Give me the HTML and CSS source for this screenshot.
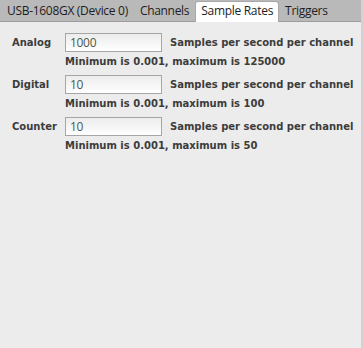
FILE: index.html
```html
<!DOCTYPE html>
<html lang="en">
<head>
    <meta charset="UTF-8">
    <title>Sample Rates</title>
    <link rel="stylesheet" href="styles.css">
</head>
<body>
    <div class="window">
        <div class="tabs">
            <span class="tab">USB-1608GX (Device 0)</span>
            <span class="tab">Channels</span>
            <span class="tab active">Sample Rates</span>
            <span class="tab">Triggers</span>
        </div>
        <div class="rates">
            <div class="rate-row">
                <span class="rate-label">Analog</span>
                <input class="rate-input" type="text" value="1000">
                <span class="rate-unit">Samples per second per channel</span>
            </div>
            <div class="rate-hint">Minimum is 0.001, maximum is 125000</div>

            <div class="rate-row">
                <span class="rate-label">Digital</span>
                <input class="rate-input" type="text" value="10">
                <span class="rate-unit">Samples per second per channel</span>
            </div>
            <div class="rate-hint">Minimum is 0.001, maximum is 100</div>

            <div class="rate-row">
                <span class="rate-label">Counter</span>
                <input class="rate-input" type="text" value="10">
                <span class="rate-unit">Samples per second per channel</span>
            </div>
            <div class="rate-hint">Minimum is 0.001, maximum is 50</div>
        </div>
    </div>
</body>
</html>
```

FILE: styles.css
```css
/* Page */
body {
    margin: 0;
    background: #ececec;
    font-family: "DejaVu Sans", Tahoma, sans-serif;
}

.window {
    height: 348px;
    box-sizing: border-box;
    border-right: 2px solid #d2d2d2;
}

/* Tab strip */
.tabs {
    display: flex;
    align-items: flex-end;
    height: 21px;
    background: #b9b9b9;
    border-bottom: 1px solid #9c9c9c;
    font-family: "Open Sans", "Noto Sans", sans-serif;
    font-size: 12px;
    letter-spacing: -0.3px;
    color: #1e1e1e;
}

.tab {
    padding: 0 6px;
    height: 19px;
    line-height: 18px;
    white-space: nowrap;
}

.tab:first-child {
    padding-left: 7px;
}

.tab.active {
    background: #fff;
    border: 1px solid #a8a8a8;
    border-bottom: none;
    border-radius: 3px 3px 0 0;
    height: 20px;
    margin-bottom: -1px;
    padding: 0 5px;
}

/* Sample rate rows */
.rates {
    padding: 11px 0 0 12px;
    color: #3c3c3c;
    font-size: 10px;
    font-weight: bold;
}

.rate-row {
    display: flex;
    align-items: center;
    height: 19px;
}

.rate-label {
    width: 53px;
}

.rate-input {
    box-sizing: border-box;
    width: 97px;
    height: 19px;
    margin: 0;
    padding: 0 4px;
    border: 1px solid #a6a6a6;
    background: linear-gradient(#ececec, #ffffff);
    font-family: "Open Sans", "Noto Sans", sans-serif;
    font-size: 12px;
    letter-spacing: -0.3px;
    color: #4d5a45;
    outline: none;
}

.rate-unit {
    margin-left: 8px;
    white-space: nowrap;
}

.rate-hint {
    margin-left: 53px;
    padding-top: 2px;
    line-height: 16px;
    margin-bottom: 5px;
    white-space: nowrap;
}
```
